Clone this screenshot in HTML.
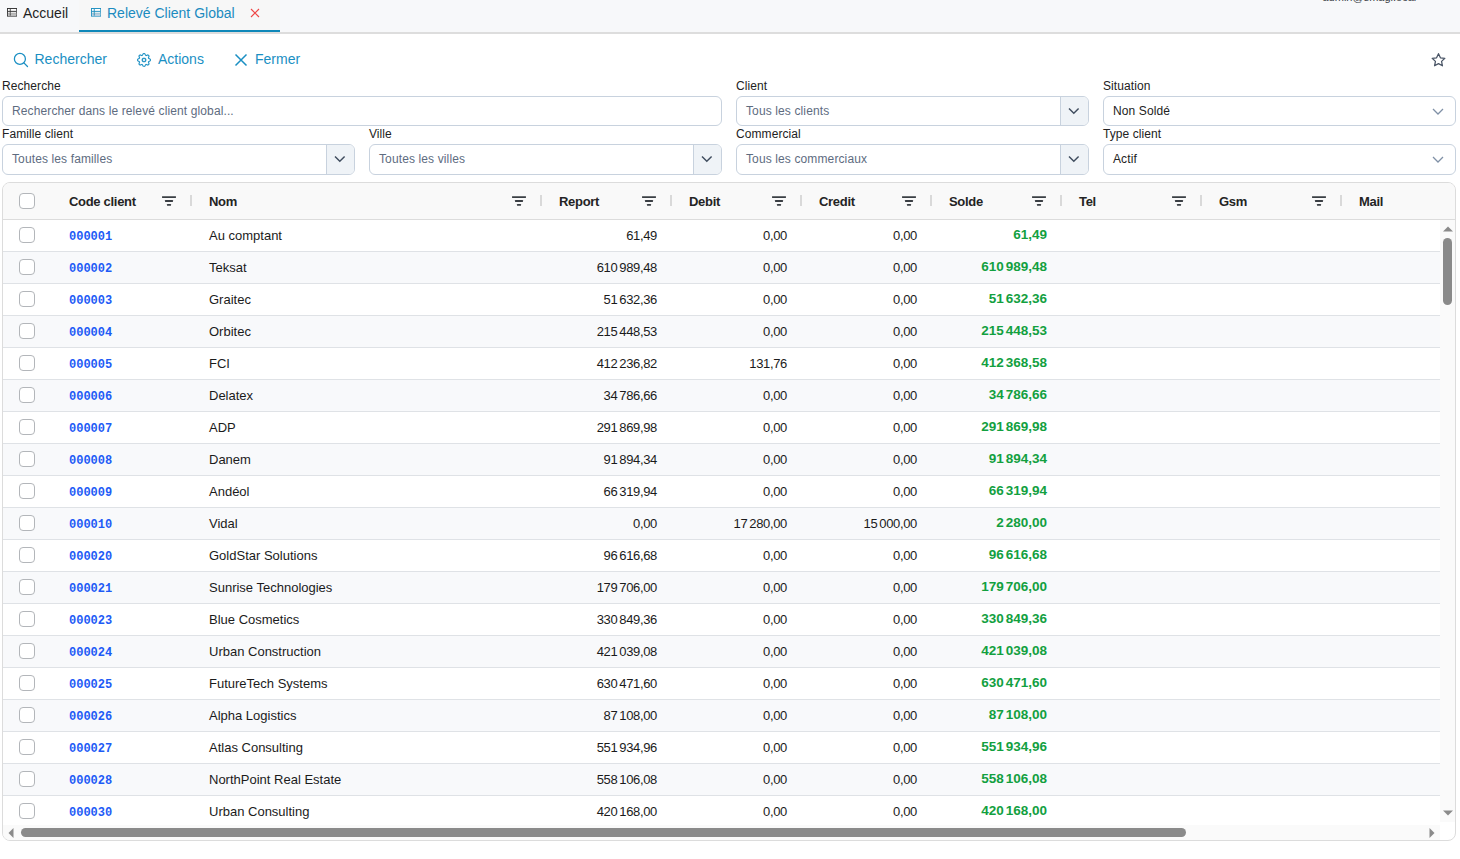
<!DOCTYPE html>
<html><head><meta charset="utf-8"><title>Relevé Client Global</title>
<style>
*{box-sizing:border-box;margin:0;padding:0}
html,body{width:1460px;height:859px;overflow:hidden;background:#fff;font-family:"Liberation Sans",sans-serif;color:#222;position:relative}
.abs{position:absolute}
#tabbar{position:absolute;left:0;top:0;width:1460px;height:32px;background:#f7f8fa}
#tabline{position:absolute;left:0;top:32px;width:1460px;height:2px;background:#dddddd}
#acttab{position:absolute;left:79px;top:0;width:201px;height:32px;background:#f7f7f7}
#actline{position:absolute;left:79px;top:30px;width:201px;height:2px;background:#0f88b9}
.tabtxt{position:absolute;top:5px;font-size:14px;line-height:16px;white-space:nowrap}
.tbtxt{position:absolute;top:51px;font-size:14px;line-height:16px;color:#1a8fc3;white-space:nowrap}
.lbl{position:absolute;font-size:12px;line-height:14px;color:#222;white-space:nowrap;letter-spacing:0.08px}
.inp{position:absolute;height:30px;border:1px solid #c8d2de;border-radius:6px;background:#fff}
.ph{position:absolute;left:9px;top:7px;font-size:12px;line-height:14px;color:#5e6c7f;white-space:nowrap;letter-spacing:0.12px}
.val{color:#222}
.btn{position:absolute;right:0;top:0;width:28px;height:100%;background:#eff3f7;border-left:1px solid #c8d2de;border-radius:0 5px 5px 0}
.btn svg{position:absolute;left:6px;top:10px}
.nsel svg{position:absolute;right:11.5px;top:11px}
#tbl{position:absolute;left:2px;top:182px;width:1454px;height:659px;border:1px solid #dcdcdc;border-radius:8px;overflow:hidden;background:#fff}
#thead{position:absolute;left:0;top:0;width:1452px;height:37px;background:#f9f9f9;border-bottom:1px solid #dcdcdc}
.ht{position:absolute;top:11px;font-size:13px;line-height:15px;font-weight:bold;color:#242424;white-space:nowrap;letter-spacing:-0.3px}
.fiw{position:absolute;top:13px;width:14px;height:11px}
.fi{display:block}
.sep{position:absolute;top:12px;width:2px;height:11px;background:#d9d9d9}
.cb{position:absolute;top:7px;width:16px;height:16px;border:1px solid #b3b6ba;border-radius:4px;background:#fff}
#body{position:absolute;left:0;top:0;width:1438px;height:643px;overflow:hidden}
.row{position:absolute;left:0;width:1438px;height:32px;border-bottom:1px solid #dfe2e6;background:#fff}
.row.alt{background:#f8f9fb}
.code{position:absolute;top:10px;font-family:"Liberation Mono",monospace;font-weight:bold;font-size:12px;line-height:14px;color:#1e5bf6;white-space:nowrap}
.nom{position:absolute;top:8px;font-size:13px;line-height:15px;color:#1b1b1b;white-space:nowrap}
.n{position:absolute;top:8px;width:200px;letter-spacing:-0.35px;font-size:13px;line-height:15px;color:#1b1b1b;white-space:nowrap;text-align:right}
.n.g{color:#12a03f;font-weight:bold;letter-spacing:0;font-size:13.5px;top:6.8px}
.ns{display:inline-block;width:2px}
#vtrack{position:absolute;left:1437px;top:37px;width:15px;height:602px;background:#fafafa}
#htrack{position:absolute;left:0;top:642px;width:1437px;height:15px;background:#fafafa}

</style></head><body>
<div id="tabbar"></div>
<div id="acttab"></div>
<div id="actline"></div>
<div id="tabline"></div>
<svg class="abs" style="left:7px;top:8.3px" width="10.2" height="8.6" viewBox="0 0 11 9" preserveAspectRatio="none"><rect x="0.5" y="0.5" width="10" height="8" fill="#fff" stroke="#333" stroke-width="1"/><rect x="1" y="5.5" width="9" height="2.5" fill="#bbb"/><rect x="3" y="1" width="1" height="7" fill="#444"/><rect x="1" y="3" width="9" height="1" fill="#333"/><rect x="1" y="5" width="9" height="0.6" fill="#888"/></svg>
<div class="tabtxt" style="left:23px;color:#1f1f1f">Accueil</div>
<svg class="abs" style="left:91px;top:8.3px" width="10.2" height="8.6" viewBox="0 0 11 9" preserveAspectRatio="none"><rect x="0.5" y="0.5" width="10" height="8" fill="#fff" stroke="#1e8fc0" stroke-width="1"/><rect x="1" y="5.5" width="9" height="2.5" fill="#bcd"/><rect x="3" y="1" width="1" height="7" fill="#1e8fc0"/><rect x="1" y="3" width="9" height="1" fill="#1e8fc0"/><rect x="1" y="5" width="9" height="0.6" fill="#6ab"/></svg>
<div class="tabtxt" style="left:107px;color:#1b8bc0">Relevé Client Global</div>
<svg class="abs" style="left:250px;top:8px" width="10" height="10" viewBox="0 0 10 10"><path d="M1 1 L9 9 M9 1 L1 9" stroke="#ef4646" stroke-width="1.15"/></svg>
<div class="abs" style="left:1322.5px;top:-9.5px;font-size:11px;line-height:13px;color:#3a3f47;white-space:nowrap">admin@smagi.ocal</div>

<!-- toolbar -->
<svg class="abs" style="left:13px;top:52px" width="16" height="16" viewBox="0 0 16 16"><circle cx="6.9" cy="6.9" r="5.5" fill="none" stroke="#1a8fc3" stroke-width="1.25"/><path d="M10.9 10.9 L14.5 14.5" stroke="#1a8fc3" stroke-width="1.3" stroke-linecap="round"/></svg>
<div class="tbtxt" style="left:34.5px">Rechercher</div>
<svg class="abs" style="left:137px;top:53px" width="14" height="14" viewBox="0 0 16 16" fill="#1a8fc3" stroke="#1a8fc3" stroke-width="0.25"><path d="M8 5.3a2.7 2.7 0 1 0 0 5.4 2.7 2.7 0 0 0 0-5.4M6.6 8a1.4 1.4 0 1 1 2.8 0 1.4 1.4 0 0 1-2.8 0"/><path d="M9.796 1.343c-.527-1.79-3.065-1.79-3.592 0l-.094.319a.873.873 0 0 1-1.255.52l-.292-.16c-1.64-.892-3.433.902-2.54 2.541l.159.292a.873.873 0 0 1-.52 1.255l-.319.094c-1.79.527-1.79 3.065 0 3.592l.319.094a.873.873 0 0 1 .52 1.255l-.16.292c-.892 1.64.901 3.434 2.541 2.54l.292-.159a.873.873 0 0 1 1.255.52l.094.319c.527 1.79 3.065 1.79 3.592 0l.094-.319a.873.873 0 0 1 1.255-.52l.292.16c1.64.893 3.434-.902 2.54-2.541l-.159-.292a.873.873 0 0 1 .52-1.255l.319-.094c1.79-.527 1.79-3.065 0-3.592l-.319-.094a.873.873 0 0 1-.52-1.255l.16-.292c.893-1.64-.902-3.433-2.541-2.54l-.292.159a.873.873 0 0 1-1.255-.52zm-2.633.283c.246-.835 1.428-.835 1.674 0l.094.319a1.873 1.873 0 0 0 2.693 1.115l.291-.16c.764-.415 1.6.42 1.184 1.185l-.159.292a1.873 1.873 0 0 0 1.116 2.692l.318.094c.835.246.835 1.428 0 1.674l-.319.094a1.873 1.873 0 0 0-1.115 2.693l.16.291c.415.764-.42 1.6-1.185 1.184l-.291-.159a1.873 1.873 0 0 0-2.693 1.116l-.094.318c-.246.835-1.428.835-1.674 0l-.094-.319a1.873 1.873 0 0 0-2.692-1.115l-.292.16c-.764.415-1.6-.42-1.184-1.185l.159-.291A1.873 1.873 0 0 0 1.945 8.93l-.319-.094c-.835-.246-.835-1.428 0-1.674l.319-.094A1.873 1.873 0 0 0 3.06 4.377l-.16-.292c-.415-.764.42-1.6 1.185-1.184l.292.159a1.873 1.873 0 0 0 2.692-1.115z"/></svg>
<div class="tbtxt" style="left:158px">Actions</div>
<svg class="abs" style="left:234px;top:53px" width="14" height="14" viewBox="0 0 14 14"><path d="M1.5 1.5 L12.5 12.5 M12.5 1.5 L1.5 12.5" stroke="#1a8fc3" stroke-width="1.5"/></svg>
<div class="tbtxt" style="left:255px">Fermer</div>
<svg class="abs" style="left:1430px;top:52px" width="17" height="16" viewBox="0 0 24 24"><path fill="none" stroke="#4a5566" stroke-width="1.9" stroke-linejoin="round" d="M12 2.5l2.9 6.2 6.6.8-4.9 4.6 1.3 6.6L12 17.4l-5.9 3.3 1.3-6.6-4.9-4.6 6.6-.8z"/></svg>

<!-- filters -->
<div class="lbl" style="left:2px;top:79px">Recherche</div>
<div class="inp" style="left:2px;top:96px;width:720px"><div class="ph">Rechercher dans le relevé client global...</div></div>
<div class="lbl" style="left:736px;top:79px">Client</div>
<div class="inp" style="left:736px;top:96px;width:353px"><div class="ph">Tous les clients</div><div class="btn"><svg width="13" height="8" viewBox="0 0 13 8"><path d="M2 1.5 L6.8 6.2 L11.6 1.5" fill="none" stroke="#3f4c5e" stroke-width="1.45"/></svg></div></div>
<div class="lbl" style="left:1103px;top:79px">Situation</div>
<div class="inp nsel" style="left:1103px;top:96px;width:353px"><div class="ph val">Non Soldé</div><svg width="12" height="7" viewBox="0 0 12 7"><path d="M1 1 L6 6 L11 1" fill="none" stroke="#7f90a6" stroke-width="1.3"/></svg></div>

<div class="lbl" style="left:2px;top:127px">Famille client</div>
<div class="inp" style="left:2px;top:144px;width:353px;height:31px"><div class="ph">Toutes les familles</div><div class="btn"><svg width="13" height="8" viewBox="0 0 13 8"><path d="M2 1.5 L6.8 6.2 L11.6 1.5" fill="none" stroke="#3f4c5e" stroke-width="1.45"/></svg></div></div>
<div class="lbl" style="left:369px;top:127px">Ville</div>
<div class="inp" style="left:369px;top:144px;width:353px;height:31px"><div class="ph">Toutes les villes</div><div class="btn"><svg width="13" height="8" viewBox="0 0 13 8"><path d="M2 1.5 L6.8 6.2 L11.6 1.5" fill="none" stroke="#3f4c5e" stroke-width="1.45"/></svg></div></div>
<div class="lbl" style="left:736px;top:127px">Commercial</div>
<div class="inp" style="left:736px;top:144px;width:353px;height:31px"><div class="ph">Tous les commerciaux</div><div class="btn"><svg width="13" height="8" viewBox="0 0 13 8"><path d="M2 1.5 L6.8 6.2 L11.6 1.5" fill="none" stroke="#3f4c5e" stroke-width="1.45"/></svg></div></div>
<div class="lbl" style="left:1103px;top:127px">Type client</div>
<div class="inp nsel" style="left:1103px;top:144px;width:353px;height:31px"><div class="ph val">Actif</div><svg width="12" height="7" viewBox="0 0 12 7"><path d="M1 1 L6 6 L11 1" fill="none" stroke="#7f90a6" stroke-width="1.3"/></svg></div>

<!-- table -->
<div id="tbl">
 <div id="thead">
  <div class="cb" style="left:16px;top:10px"></div>
  <div class="ht" style="left:66px">Code client</div>
<div class="fiw" style="left:159px"><svg class="fi" width="14" height="11" viewBox="0 0 14 11"><rect x="0" y="0.2" width="14" height="1.8" rx="0.4" fill="#3a3f44"/><rect x="3" y="4.1" width="8" height="1.8" rx="0.4" fill="#3a3f44"/><rect x="5" y="8" width="4" height="1.8" rx="0.4" fill="#3a3f44"/></svg></div>
<div class="sep" style="left:187px"></div>
<div class="ht" style="left:206px">Nom</div>
<div class="fiw" style="left:509px"><svg class="fi" width="14" height="11" viewBox="0 0 14 11"><rect x="0" y="0.2" width="14" height="1.8" rx="0.4" fill="#3a3f44"/><rect x="3" y="4.1" width="8" height="1.8" rx="0.4" fill="#3a3f44"/><rect x="5" y="8" width="4" height="1.8" rx="0.4" fill="#3a3f44"/></svg></div>
<div class="sep" style="left:537px"></div>
<div class="ht" style="left:556px">Report</div>
<div class="fiw" style="left:639px"><svg class="fi" width="14" height="11" viewBox="0 0 14 11"><rect x="0" y="0.2" width="14" height="1.8" rx="0.4" fill="#3a3f44"/><rect x="3" y="4.1" width="8" height="1.8" rx="0.4" fill="#3a3f44"/><rect x="5" y="8" width="4" height="1.8" rx="0.4" fill="#3a3f44"/></svg></div>
<div class="sep" style="left:667px"></div>
<div class="ht" style="left:686px">Debit</div>
<div class="fiw" style="left:769px"><svg class="fi" width="14" height="11" viewBox="0 0 14 11"><rect x="0" y="0.2" width="14" height="1.8" rx="0.4" fill="#3a3f44"/><rect x="3" y="4.1" width="8" height="1.8" rx="0.4" fill="#3a3f44"/><rect x="5" y="8" width="4" height="1.8" rx="0.4" fill="#3a3f44"/></svg></div>
<div class="sep" style="left:797px"></div>
<div class="ht" style="left:816px">Credit</div>
<div class="fiw" style="left:899px"><svg class="fi" width="14" height="11" viewBox="0 0 14 11"><rect x="0" y="0.2" width="14" height="1.8" rx="0.4" fill="#3a3f44"/><rect x="3" y="4.1" width="8" height="1.8" rx="0.4" fill="#3a3f44"/><rect x="5" y="8" width="4" height="1.8" rx="0.4" fill="#3a3f44"/></svg></div>
<div class="sep" style="left:927px"></div>
<div class="ht" style="left:946px">Solde</div>
<div class="fiw" style="left:1029px"><svg class="fi" width="14" height="11" viewBox="0 0 14 11"><rect x="0" y="0.2" width="14" height="1.8" rx="0.4" fill="#3a3f44"/><rect x="3" y="4.1" width="8" height="1.8" rx="0.4" fill="#3a3f44"/><rect x="5" y="8" width="4" height="1.8" rx="0.4" fill="#3a3f44"/></svg></div>
<div class="sep" style="left:1057px"></div>
<div class="ht" style="left:1076px">Tel</div>
<div class="fiw" style="left:1169px"><svg class="fi" width="14" height="11" viewBox="0 0 14 11"><rect x="0" y="0.2" width="14" height="1.8" rx="0.4" fill="#3a3f44"/><rect x="3" y="4.1" width="8" height="1.8" rx="0.4" fill="#3a3f44"/><rect x="5" y="8" width="4" height="1.8" rx="0.4" fill="#3a3f44"/></svg></div>
<div class="sep" style="left:1197px"></div>
<div class="ht" style="left:1216px">Gsm</div>
<div class="fiw" style="left:1309px"><svg class="fi" width="14" height="11" viewBox="0 0 14 11"><rect x="0" y="0.2" width="14" height="1.8" rx="0.4" fill="#3a3f44"/><rect x="3" y="4.1" width="8" height="1.8" rx="0.4" fill="#3a3f44"/><rect x="5" y="8" width="4" height="1.8" rx="0.4" fill="#3a3f44"/></svg></div>
<div class="sep" style="left:1337px"></div>
<div class="ht" style="left:1356px">Mail</div>
 </div>
 <div id="body" style="top:0">
  <div class="row" style="top:37px"><div class="cb" style="left:16px"></div><div class="code" style="left:66px">000001</div><div class="nom" style="left:206px">Au comptant</div><div class="n" style="left:454px">61,49</div><div class="n" style="left:584px">0,00</div><div class="n" style="left:714px">0,00</div><div class="n g" style="left:844px">61,49</div></div>
<div class="row alt" style="top:69px"><div class="cb" style="left:16px"></div><div class="code" style="left:66px">000002</div><div class="nom" style="left:206px">Teksat</div><div class="n" style="left:454px">610<span class=ns></span>989,48</div><div class="n" style="left:584px">0,00</div><div class="n" style="left:714px">0,00</div><div class="n g" style="left:844px">610<span class=ns></span>989,48</div></div>
<div class="row" style="top:101px"><div class="cb" style="left:16px"></div><div class="code" style="left:66px">000003</div><div class="nom" style="left:206px">Graitec</div><div class="n" style="left:454px">51<span class=ns></span>632,36</div><div class="n" style="left:584px">0,00</div><div class="n" style="left:714px">0,00</div><div class="n g" style="left:844px">51<span class=ns></span>632,36</div></div>
<div class="row alt" style="top:133px"><div class="cb" style="left:16px"></div><div class="code" style="left:66px">000004</div><div class="nom" style="left:206px">Orbitec</div><div class="n" style="left:454px">215<span class=ns></span>448,53</div><div class="n" style="left:584px">0,00</div><div class="n" style="left:714px">0,00</div><div class="n g" style="left:844px">215<span class=ns></span>448,53</div></div>
<div class="row" style="top:165px"><div class="cb" style="left:16px"></div><div class="code" style="left:66px">000005</div><div class="nom" style="left:206px">FCI</div><div class="n" style="left:454px">412<span class=ns></span>236,82</div><div class="n" style="left:584px">131,76</div><div class="n" style="left:714px">0,00</div><div class="n g" style="left:844px">412<span class=ns></span>368,58</div></div>
<div class="row alt" style="top:197px"><div class="cb" style="left:16px"></div><div class="code" style="left:66px">000006</div><div class="nom" style="left:206px">Delatex</div><div class="n" style="left:454px">34<span class=ns></span>786,66</div><div class="n" style="left:584px">0,00</div><div class="n" style="left:714px">0,00</div><div class="n g" style="left:844px">34<span class=ns></span>786,66</div></div>
<div class="row" style="top:229px"><div class="cb" style="left:16px"></div><div class="code" style="left:66px">000007</div><div class="nom" style="left:206px">ADP</div><div class="n" style="left:454px">291<span class=ns></span>869,98</div><div class="n" style="left:584px">0,00</div><div class="n" style="left:714px">0,00</div><div class="n g" style="left:844px">291<span class=ns></span>869,98</div></div>
<div class="row alt" style="top:261px"><div class="cb" style="left:16px"></div><div class="code" style="left:66px">000008</div><div class="nom" style="left:206px">Danem</div><div class="n" style="left:454px">91<span class=ns></span>894,34</div><div class="n" style="left:584px">0,00</div><div class="n" style="left:714px">0,00</div><div class="n g" style="left:844px">91<span class=ns></span>894,34</div></div>
<div class="row" style="top:293px"><div class="cb" style="left:16px"></div><div class="code" style="left:66px">000009</div><div class="nom" style="left:206px">Andéol</div><div class="n" style="left:454px">66<span class=ns></span>319,94</div><div class="n" style="left:584px">0,00</div><div class="n" style="left:714px">0,00</div><div class="n g" style="left:844px">66<span class=ns></span>319,94</div></div>
<div class="row alt" style="top:325px"><div class="cb" style="left:16px"></div><div class="code" style="left:66px">000010</div><div class="nom" style="left:206px">Vidal</div><div class="n" style="left:454px">0,00</div><div class="n" style="left:584px">17<span class=ns></span>280,00</div><div class="n" style="left:714px">15<span class=ns></span>000,00</div><div class="n g" style="left:844px">2<span class=ns></span>280,00</div></div>
<div class="row" style="top:357px"><div class="cb" style="left:16px"></div><div class="code" style="left:66px">000020</div><div class="nom" style="left:206px">GoldStar Solutions</div><div class="n" style="left:454px">96<span class=ns></span>616,68</div><div class="n" style="left:584px">0,00</div><div class="n" style="left:714px">0,00</div><div class="n g" style="left:844px">96<span class=ns></span>616,68</div></div>
<div class="row alt" style="top:389px"><div class="cb" style="left:16px"></div><div class="code" style="left:66px">000021</div><div class="nom" style="left:206px">Sunrise Technologies</div><div class="n" style="left:454px">179<span class=ns></span>706,00</div><div class="n" style="left:584px">0,00</div><div class="n" style="left:714px">0,00</div><div class="n g" style="left:844px">179<span class=ns></span>706,00</div></div>
<div class="row" style="top:421px"><div class="cb" style="left:16px"></div><div class="code" style="left:66px">000023</div><div class="nom" style="left:206px">Blue Cosmetics</div><div class="n" style="left:454px">330<span class=ns></span>849,36</div><div class="n" style="left:584px">0,00</div><div class="n" style="left:714px">0,00</div><div class="n g" style="left:844px">330<span class=ns></span>849,36</div></div>
<div class="row alt" style="top:453px"><div class="cb" style="left:16px"></div><div class="code" style="left:66px">000024</div><div class="nom" style="left:206px">Urban Construction</div><div class="n" style="left:454px">421<span class=ns></span>039,08</div><div class="n" style="left:584px">0,00</div><div class="n" style="left:714px">0,00</div><div class="n g" style="left:844px">421<span class=ns></span>039,08</div></div>
<div class="row" style="top:485px"><div class="cb" style="left:16px"></div><div class="code" style="left:66px">000025</div><div class="nom" style="left:206px">FutureTech Systems</div><div class="n" style="left:454px">630<span class=ns></span>471,60</div><div class="n" style="left:584px">0,00</div><div class="n" style="left:714px">0,00</div><div class="n g" style="left:844px">630<span class=ns></span>471,60</div></div>
<div class="row alt" style="top:517px"><div class="cb" style="left:16px"></div><div class="code" style="left:66px">000026</div><div class="nom" style="left:206px">Alpha Logistics</div><div class="n" style="left:454px">87<span class=ns></span>108,00</div><div class="n" style="left:584px">0,00</div><div class="n" style="left:714px">0,00</div><div class="n g" style="left:844px">87<span class=ns></span>108,00</div></div>
<div class="row" style="top:549px"><div class="cb" style="left:16px"></div><div class="code" style="left:66px">000027</div><div class="nom" style="left:206px">Atlas Consulting</div><div class="n" style="left:454px">551<span class=ns></span>934,96</div><div class="n" style="left:584px">0,00</div><div class="n" style="left:714px">0,00</div><div class="n g" style="left:844px">551<span class=ns></span>934,96</div></div>
<div class="row alt" style="top:581px"><div class="cb" style="left:16px"></div><div class="code" style="left:66px">000028</div><div class="nom" style="left:206px">NorthPoint Real Estate</div><div class="n" style="left:454px">558<span class=ns></span>106,08</div><div class="n" style="left:584px">0,00</div><div class="n" style="left:714px">0,00</div><div class="n g" style="left:844px">558<span class=ns></span>106,08</div></div>
<div class="row" style="top:613px"><div class="cb" style="left:16px"></div><div class="code" style="left:66px">000030</div><div class="nom" style="left:206px">Urban Consulting</div><div class="n" style="left:454px">420<span class=ns></span>168,00</div><div class="n" style="left:584px">0,00</div><div class="n" style="left:714px">0,00</div><div class="n g" style="left:844px">420<span class=ns></span>168,00</div></div>
 </div>
 <div id="vtrack">
  <svg class="abs" style="left:3px;top:6px" width="10" height="6" viewBox="0 0 10 6"><path d="M0 5.5 L5 0.5 L10 5.5z" fill="#8a8a8a"/></svg>
  <div class="abs" style="left:3px;top:18px;width:9px;height:67px;border-radius:5px;background:#8a8a8a"></div>
  <svg class="abs" style="left:3px;top:590px" width="10" height="6" viewBox="0 0 10 6"><path d="M0 0.5 L5 5.5 L10 0.5z" fill="#8a8a8a"/></svg>
 </div>
 <div id="htrack">
  <svg class="abs" style="left:4.5px;top:3px" width="6" height="10" viewBox="0 0 6 10"><path d="M5.5 0 L0.5 5 L5.5 10z" fill="#8a8a8a"/></svg>
  <div class="abs" style="left:18px;top:3px;width:1165px;height:9px;border-radius:5px;background:#8a8a8a"></div>
  <svg class="abs" style="left:1426px;top:3px" width="6" height="10" viewBox="0 0 6 10"><path d="M0.5 0 L5.5 5 L0.5 10z" fill="#8a8a8a"/></svg>
 </div>
</div>
</body></html>
